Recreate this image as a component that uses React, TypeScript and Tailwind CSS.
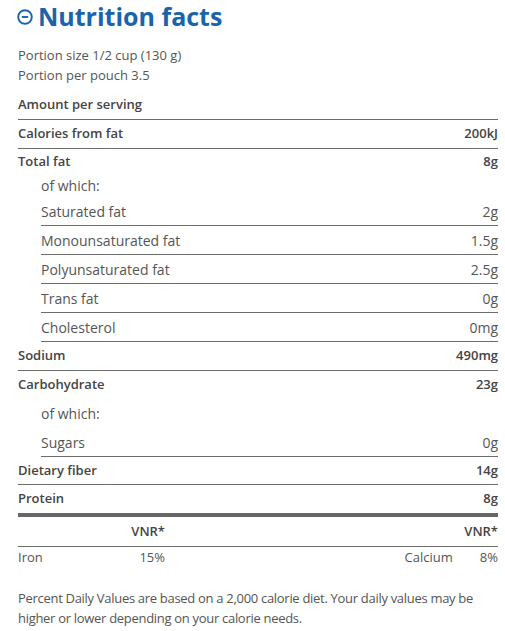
import React from "react"

type Row = {
    label: string
    value?: string
    bold?: boolean
    indent?: boolean
    h: string
    line?: "full" | "indent" | "none"
}

const rows: Row[] = [
    { label: "Calories from fat", value: "200kJ", bold: true, h: "h-[29px]", line: "full" },
    { label: "Total fat", value: "8g", bold: true, h: "h-[25px]", line: "none" },
    { label: "of which:", indent: true, h: "h-[23px]", line: "none" },
    { label: "Saturated fat", value: "2g", indent: true, h: "h-[29px]", line: "indent" },
    { label: "Monounsaturated fat", value: "1.5g", indent: true, h: "h-[29px]", line: "indent" },
    { label: "Polyunsaturated fat", value: "2.5g", indent: true, h: "h-[29px]", line: "indent" },
    { label: "Trans fat", value: "0g", indent: true, h: "h-[29px]", line: "indent" },
    { label: "Cholesterol", value: "0mg", indent: true, h: "h-[29px]", line: "indent" },
    { label: "Sodium", value: "490mg", bold: true, h: "h-[29px]", line: "full" },
    { label: "Carbohydrate", value: "23g", bold: true, h: "h-[28px]", line: "none" },
    { label: "of which:", indent: true, h: "h-[29px]", line: "none" },
    { label: "Sugars", value: "0g", indent: true, h: "h-[29px]", line: "indent" },
    { label: "Dietary fiber", value: "14g", bold: true, h: "h-[28px]", line: "full" },
    { label: "Protein", value: "8g", bold: true, h: "h-[28px]", line: "none" },
]

function NutritionRow({ row }: { row: Row }) {
    const text = row.bold
        ? "text-[13px] font-semibold text-[#444]"
        : "text-[14px] text-[#555]"
    const border =
        row.line === "none" ? "" : row.line === "indent" ? "border-b border-[#6b6b6b] ml-[23px]" : "border-b border-[#6b6b6b]"
    return (
        <div className={`${row.h} ${border} ${row.indent && row.line !== "indent" ? "pl-[23px]" : ""} flex items-center justify-between ${text}`}>
            <span>{row.label}</span>
            {row.value && <span>{row.value}</span>}
        </div>
    )
}

export default function App() {
    return (
        <div className="bg-white w-[505px] h-[631px] pl-[18px] pr-[7px] pt-[1px] text-[#555]" style={{ fontFamily: '"Open Sans", "Noto Sans", sans-serif' }}>
            <h2 className="flex items-center gap-[5px] text-[#1a63ad] text-[25px] font-bold leading-[30px]">
                <svg width="16" height="16" viewBox="0 0 16 16" fill="none" stroke="currentColor" strokeWidth="1.9" className="mt-[1px] -ml-[1px]">
                    <circle cx="8" cy="8" r="6.8" />
                    <line x1="4.8" y1="8" x2="11.2" y2="8" />
                </svg>
                Nutrition facts
            </h2>

            <div className="mt-[14px] text-[13px] leading-[20px]">
                <p>Portion size 1/2 cup (130 g)</p>
                <p>Portion per pouch 3.5</p>
            </div>

            <div className="mt-[6px] h-[29px] flex items-center text-[13px] font-semibold text-[#444] border-b border-[#6b6b6b]">
                Amount per serving
            </div>

            {rows.map((r, i) => (
                <NutritionRow key={i} row={r} />
            ))}

            <div className="h-[4px] bg-[#666]" />

            <div className="h-[30px] flex items-center border-b border-[#6b6b6b] text-[13px] font-semibold text-[#444]">
                <span className="w-[147px] text-right">VNR*</span>
                <span className="ml-auto">VNR*</span>
            </div>
            <div className="h-[22px] flex items-center text-[13px]">
                <div className="w-[147px] flex justify-between">
                    <span>Iron</span>
                    <span>15%</span>
                </div>
                <div className="ml-auto flex gap-[27px]">
                    <span>Calcium</span>
                    <span>8%</span>
                </div>
            </div>

            <p className="mt-[19px] text-[13px] leading-[20px] tracking-[-0.3px]">
                Percent Daily Values are based on a 2,000 calorie diet. Your daily values may be higher or lower depending on your calorie needs.
            </p>
        </div>
    )
}
